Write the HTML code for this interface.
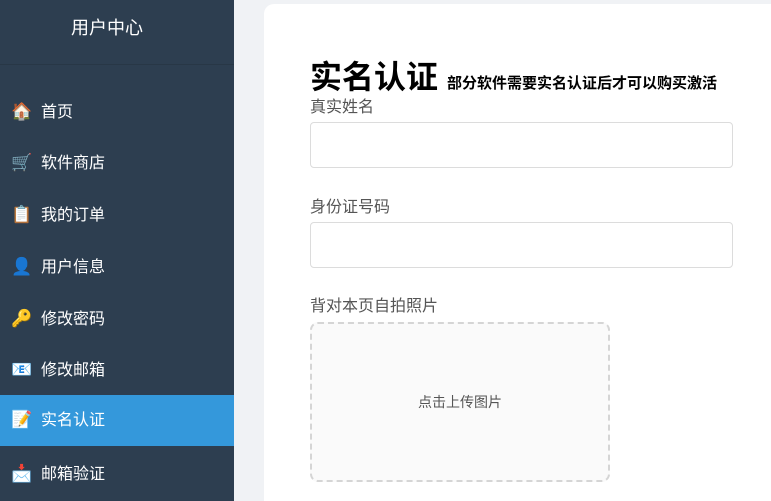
<!DOCTYPE html>
<html><head><meta charset="utf-8"><style>
*{margin:0;padding:0;box-sizing:border-box}
html,body{width:771px;height:501px;overflow:hidden}
body{background:#f0f2f5;font-family:"Liberation Sans","Noto Sans CJK SC",sans-serif;position:relative}
.side{position:absolute;left:0;top:0;width:234px;height:501px;background:#2d3e50}
.hd{height:65px;border-bottom:1px solid #283746;color:#fff;font-size:18px;line-height:56px;padding-left:71px}
.it{position:absolute;left:0;width:234px;height:51px;color:#fff;font-size:16px;line-height:51px;padding-left:41px}
.it.a{background:#3498db}
.ic{position:absolute;left:11px;top:16px;width:20px;height:18px;font-size:17px;line-height:18px}
.card{position:absolute;left:264px;top:4px;width:520px;height:497px;background:#fff;border-radius:10px 10px 0 0}
h1{position:absolute;left:310px;top:52px;font-size:32px;font-weight:bold;color:#000;white-space:nowrap}
h1 small{font-size:15px;margin-left:9px}
.lb{position:absolute;left:310px;font-size:16px;color:#555}
.in{position:absolute;left:310px;width:423px;height:46px;border:1px solid #dcdcdc;border-radius:4px}
.up{position:absolute;left:310px;top:322px;width:300px;height:160px;border:2px dashed #d5d5d5;border-radius:8px;background:#fafafa;text-align:center;line-height:156px;font-size:14px;color:#555}
</style></head><body>
<div class="side"><div class="hd">用户中心</div>
<div class="it" style="top:87px"><span class="ic">🏠</span>首页</div>
<div class="it" style="top:138px"><span class="ic">🛒</span>软件商店</div>
<div class="it" style="top:190px"><span class="ic">📋</span>我的订单</div>
<div class="it" style="top:242px"><span class="ic">👤</span>用户信息</div>
<div class="it" style="top:294px"><span class="ic">🔑</span>修改密码</div>
<div class="it" style="top:345px"><span class="ic">📧</span>修改邮箱</div>
<div class="it a" style="top:395px"><span class="ic">📝</span>实名认证</div>
<div class="it" style="top:449px"><span class="ic">📩</span>邮箱验证</div>
</div>
<div class="card"></div>
<h1>实名认证<small>部分软件需要实名认证后才可以购买激活</small></h1>
<div class="lb" style="top:93px">真实姓名</div>
<div class="in" style="top:122px"></div>
<div class="lb" style="top:193px">身份证号码</div>
<div class="in" style="top:222px"></div>
<div class="lb" style="top:292px">背对本页自拍照片</div>
<div class="up">点击上传图片</div>
</body></html>
